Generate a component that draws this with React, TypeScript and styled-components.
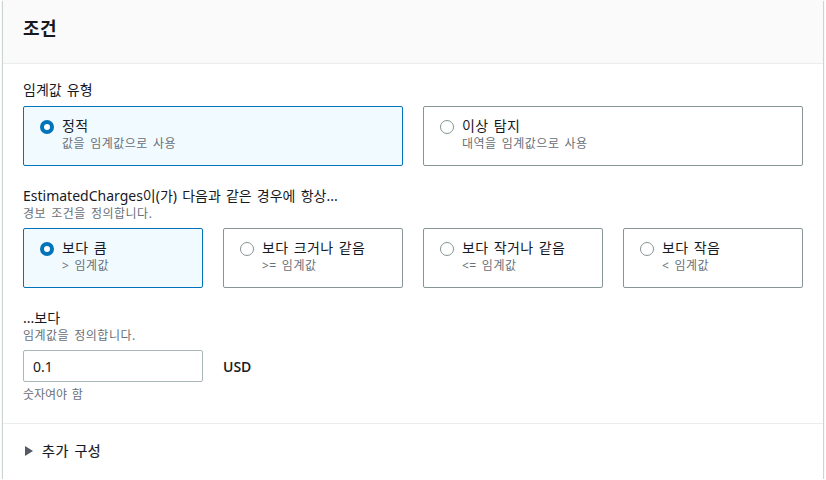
import React, { useState } from "react";
import styled, { createGlobalStyle } from "styled-components";

const GlobalStyle = createGlobalStyle`
    html, body {
        margin: 0;
        padding: 0;
        background: #ffffff;
    }
    body {
        font-family: "Noto Sans", "Noto Sans CJK KR", sans-serif;
        color: #16191f;
        word-spacing: 1.5px;
        -webkit-font-smoothing: antialiased;
    }
`;

const Page = styled.div`
    padding: 0 3px;
`;

const Panel = styled.section`
    background: #ffffff;
    box-shadow: 0 1px 1px 0 rgba(0, 28, 36, 0.3), 1px 1px 1px 0 rgba(0, 28, 36, 0.15),
        -1px 1px 1px 0 rgba(0, 28, 36, 0.15);
`;

const Header = styled.header`
    background: #fafafa;
    border-bottom: 1px solid #eaeded;
    padding: 17px 20px 24px;

    h2 {
        margin: 0;
        font-size: 18px;
        line-height: 22px;
        font-weight: 700;
        letter-spacing: 0.5px;
        color: #16191f;
    }
`;

const Body = styled.div`
    display: flex;
    flex-direction: column;
    gap: 20px;
    padding: 16px 20px 20px;
    border-bottom: 1px solid #eaeded;
`;

const Field = styled.div`
    display: flex;
    flex-direction: column;
`;

const Label = styled.div`
    font-size: 14px;
    line-height: 20px;
    color: #16191f;
`;

const Description = styled.div`
    font-size: 12px;
    line-height: 16px;
    letter-spacing: 0.5px;
    color: #687078;
`;

const Control = styled.div`
    margin-top: 6px;
`;

const Tiles = styled.div<{ $cols: number }>`
    display: grid;
    grid-template-columns: repeat(${(p) => p.$cols}, 1fr);
    gap: 20px;
`;

const Tile = styled.label<{ $checked: boolean }>`
    display: flex;
    align-items: flex-start;
    gap: 8px;
    height: 60px;
    box-sizing: border-box;
    padding: 13px 12px 8px 16px;
    border: 1px solid ${(p) => (p.$checked ? "#0073bb" : "#879596")};
    border-radius: 2px;
    background: ${(p) => (p.$checked ? "#f1faff" : "#ffffff")};
    cursor: pointer;
`;

const Radio = styled.span<{ $checked: boolean }>`
    flex: none;
    width: 14px;
    height: 14px;
    box-sizing: border-box;
    border-radius: 50%;
    border: ${(p) => (p.$checked ? "4px solid #0073bb" : "1px solid #879596")};
    background: #ffffff;
`;

const TileText = styled.div`
    display: flex;
    flex-direction: column;
    margin-top: -4px;

    strong {
        font-weight: 400;
        font-size: 14px;
        line-height: 20px;
        letter-spacing: 0.3px;
        color: #16191f;
    }
`;

const InputRow = styled.div`
    display: flex;
    align-items: center;
    gap: 20px;
`;

const Input = styled.input`
    width: 180px;
    height: 32px;
    box-sizing: border-box;
    padding: 4px 9px;
    border: 1px solid #aab7b8;
    border-radius: 2px;
    font-family: inherit;
    font-size: 14px;
    color: #16191f;
    outline: none;
`;

const Unit = styled.span`
    font-family: "Open Sans", "Noto Sans", sans-serif;
    font-size: 14px;
    font-weight: 600;
    color: #16191f;
`;

const Constraint = styled(Description)`
    margin-top: 5px;
    letter-spacing: 0;
`;

const Footer = styled.div`
    display: flex;
    align-items: center;
    gap: 5px;
    padding: 17px 18px 18px;

    span {
        font-size: 14px;
        line-height: 20px;
        font-weight: 400;
        letter-spacing: 0.5px;
        color: #16191f;
        -webkit-text-stroke: 0.2px #16191f;
    }
`;

type Option = { id: string; title: string; sub: string };

const typeOptions: Option[] = [
    { id: "static", title: "정적", sub: "값을 임계값으로 사용" },
    { id: "anomaly", title: "이상 탐지", sub: "대역을 임계값으로 사용" },
];

const conditionOptions: Option[] = [
    { id: "gt", title: "보다 큼", sub: "> 임계값" },
    { id: "gte", title: "보다 크거나 같음", sub: ">= 임계값" },
    { id: "lte", title: "보다 작거나 같음", sub: "<= 임계값" },
    { id: "lt", title: "보다 작음", sub: "< 임계값" },
];

const TileGroup: React.FC<{ options: Option[]; value: string; onChange: (v: string) => void }> = ({
    options,
    value,
    onChange,
}) => (
    <Tiles $cols={options.length}>
        {options.map((o) => (
            <Tile key={o.id} $checked={o.id === value} onClick={() => onChange(o.id)}>
                <Radio $checked={o.id === value} />
                <TileText>
                    <strong>{o.title}</strong>
                    <Description>{o.sub}</Description>
                </TileText>
            </Tile>
        ))}
    </Tiles>
);

const App: React.FC = () => {
    const [type, setType] = useState("static");
    const [cond, setCond] = useState("gt");
    const [threshold, setThreshold] = useState("0.1");

    return (
        <Page>
            <GlobalStyle />
            <Panel>
                <Header>
                    <h2>조건</h2>
                </Header>

                <Body>
                    <Field>
                        <Label>임계값 유형</Label>
                        <Control>
                            <TileGroup options={typeOptions} value={type} onChange={setType} />
                        </Control>
                    </Field>

                    <Field>
                        <Label>EstimatedCharges이(가) 다음과 같은 경우에 항상...</Label>
                        <Description>경보 조건을 정의합니다.</Description>
                        <Control>
                            <TileGroup options={conditionOptions} value={cond} onChange={setCond} />
                        </Control>
                    </Field>

                    <Field>
                        <Label>...보다</Label>
                        <Description>임계값을 정의합니다.</Description>
                        <Control>
                            <InputRow>
                                <Input value={threshold} onChange={(e) => setThreshold(e.target.value)} />
                                <Unit>USD</Unit>
                            </InputRow>
                        </Control>
                        <Constraint>숫자여야 함</Constraint>
                    </Field>
                </Body>

                <Footer>
                    <svg width="16" height="16" viewBox="0 0 16 16">
                        <polygon points="4,3 12,8 4,13" fill="#545b64" />
                    </svg>
                    <span>추가 구성</span>
                </Footer>
            </Panel>
        </Page>
    );
};

export default App;
